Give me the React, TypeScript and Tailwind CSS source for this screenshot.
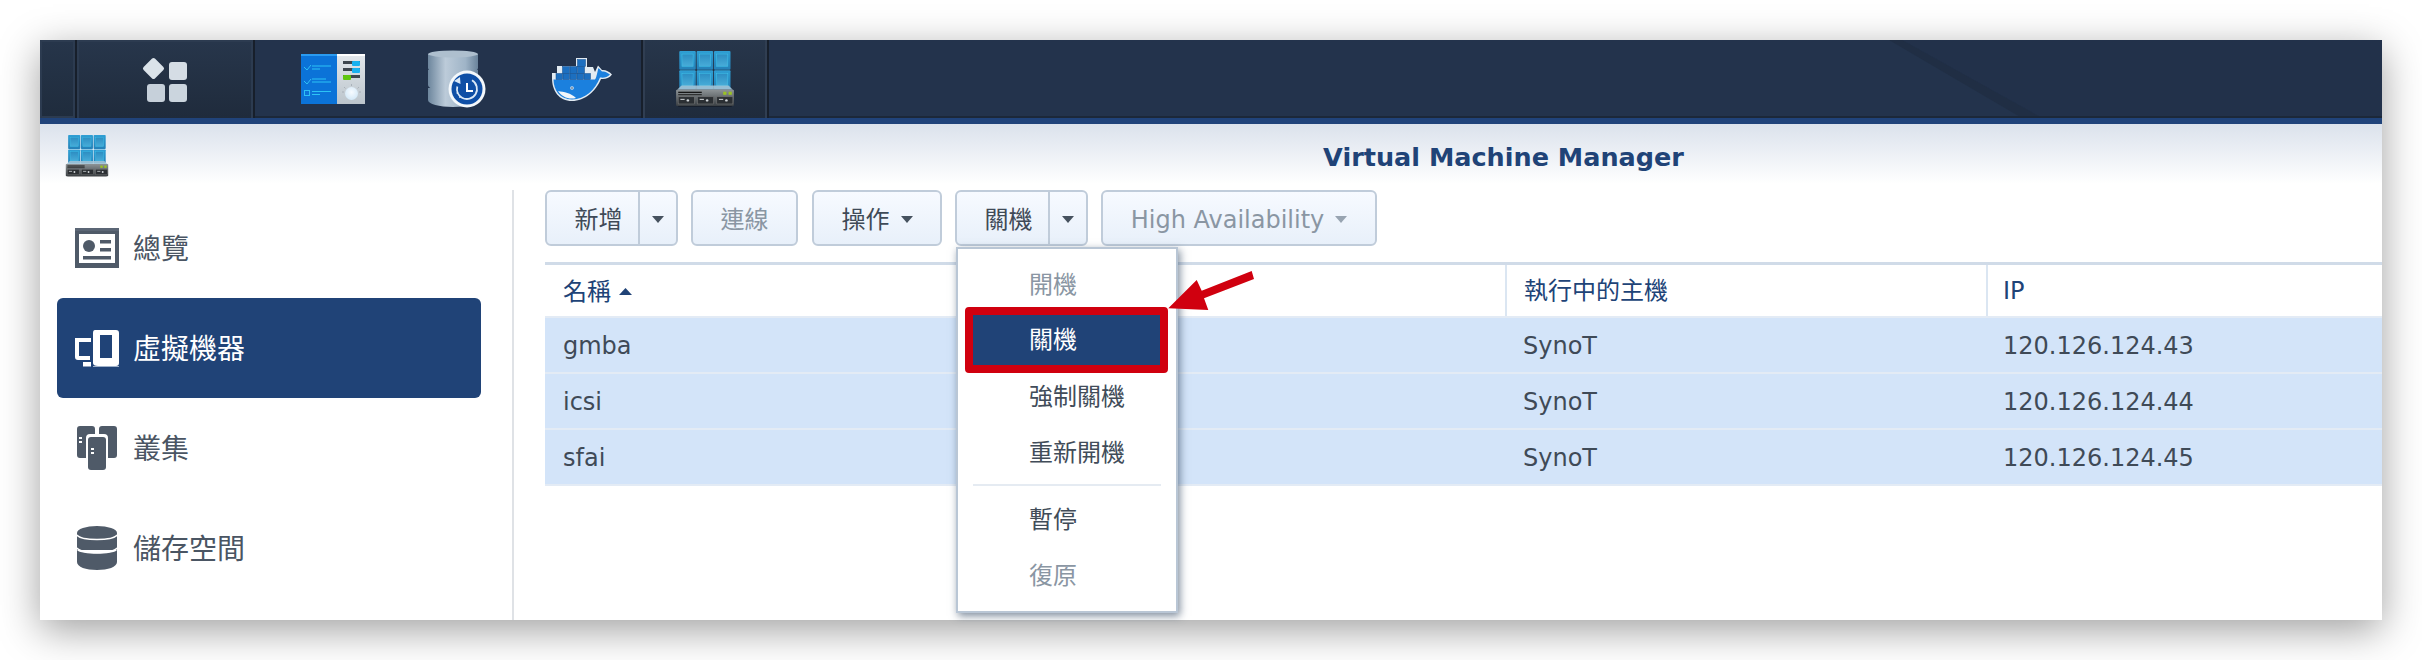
import React from "react";

function Caret({ muted = false, up = false }: { muted?: boolean; up?: boolean }) {
  return (
    <svg width={up ? 13 : 12} height="7" viewBox="0 0 12 7" preserveAspectRatio="none" className="shrink-0">
      <path d={up ? "M0 7L6 0L12 7Z" : "M0 0H12L6 7Z"} fill={up ? "#204377" : muted ? "#98a4b1" : "#46525f"} />
    </svg>
  );
}

function VmmIcon({ id, className }: { id: string; className: string }) {
  const cells = [0, 1, 2];
  return (
    <svg viewBox="0 0 56 55" preserveAspectRatio="none" className={className}>
      <defs>
        <linearGradient id={`${id}a`} x1="0" x2="0" y1="0" y2="1">
          <stop offset="0" stopColor="#2f9fd4" />
          <stop offset="1" stopColor="#2581b8" />
        </linearGradient>
        <linearGradient id={`${id}c`} x1="0" x2="0" y1="0" y2="1">
          <stop offset="0" stopColor="#2d8dc2" />
          <stop offset="1" stopColor="#47acd8" />
        </linearGradient>
        <linearGradient id={`${id}b`} x1="0" x2="0" y1="0" y2="1">
          <stop offset="0" stopColor="#8d9396" />
          <stop offset="1" stopColor="#3a3f43" />
        </linearGradient>
      </defs>
      {[0, 19].map((y) =>
        cells.map((c) => (
          <g key={`${y}-${c}`}>
            <rect x={4 + c * 16.2} y={y} width="15.4" height="18.4" rx="1" fill={`url(#${id}a)`} />
            <rect x={6.5 + c * 16.2} y={y + 3} width="10.4" height="12" fill={`url(#${id}c)`} stroke="#3fc3ea" strokeWidth="0.5" />
          </g>
        ))
      )}
      <path d="M6 34H50L54 38H2Z" fill="#a9c8d8" opacity="0.85" />
      <rect x="1" y="38" width="54" height="16" rx="1" fill={`url(#${id}b)`} />
      <rect x="3" y="40" width="22" height="1.2" fill="#111" />
      <rect x="3" y="42.4" width="22" height="1" fill="#222" />
      <rect x="45" y="40" width="3" height="3" fill="#9bc322" />
      <rect x="50" y="40" width="3" height="3" fill="#9bc322" />
      {[3, 21, 39].map((x) => (
        <g key={x}>
          <rect x={x} y="45" width="15" height="7" fill="#2b2f33" stroke="#777" strokeWidth="0.5" />
          <rect x={x + 2} y="47" width="4" height="1" fill="#cfd3d6" />
          <circle cx={x + 9} cy="48.5" r="1.2" fill="#cfd3d6" />
        </g>
      ))}
      <rect x="3" y="54" width="50" height="1" fill="#000" opacity="0.3" />
    </svg>
  );
}

function SettingsIcon() {
  return (
    <svg width="64" height="50" viewBox="0 0 64 50" className="shrink-0">
      <defs>
        <linearGradient id="setr" x1="0" x2="0" y1="0" y2="1">
          <stop offset="0" stopColor="#e3e8ec" />
          <stop offset="1" stopColor="#bcc5cc" />
        </linearGradient>
        <radialGradient id="setk" cx="0.5" cy="0.4" r="0.6">
          <stop offset="0" stopColor="#f7fbff" />
          <stop offset="1" stopColor="#d3e8f7" />
        </radialGradient>
      </defs>
      <rect x="0" y="0" width="36" height="50" fill="#0b73d8" />
      <rect x="0" y="0" width="36" height="2" fill="#2a9bf0" />
      <rect x="36" y="0" width="28" height="50" fill="url(#setr)" />
      <rect x="36" y="0" width="28" height="2" fill="#fff" />
      <g stroke="#2fc0f5" strokeWidth="1" fill="none">
        <path d="M3 13L6 16L10 11" />
        <path d="M3 27L6 30L10 25" />
        <rect x="3.5" y="36.5" width="5" height="5" />
      </g>
      <g fill="#2cc3f5">
        <rect x="11" y="11.500" width="19" height="1" />
        <rect x="11" y="14.500" width="8" height="1" />
        <rect x="11" y="24.500" width="14" height="1" />
        <rect x="11" y="27.500" width="19" height="1" />
        <rect x="11" y="37" width="19" height="1" />
        <rect x="11" y="40" width="8" height="1" />
      </g>
      <rect x="42" y="7" width="17" height="3" fill="#3e474f" />
      <rect x="51" y="7" width="8" height="5" rx="1" fill="#19b1ef" />
      <rect x="42" y="14" width="17" height="3" fill="#3e474f" />
      <rect x="51" y="14" width="8" height="5" rx="1" fill="#19b1ef" />
      <rect x="42" y="21" width="17" height="3" fill="#3e474f" />
      <rect x="42" y="21" width="8" height="5" rx="1" fill="#5fc60f" />
      <g stroke="#9ba5ad" strokeWidth="0.7">
        <path d="M50.500 30V32M43 33L44.500 34.500M58 33L56.500 34.500M41 38H43M58 38H60" />
      </g>
      <circle cx="50.500" cy="39.500" r="6.500" fill="url(#setk)" />
    </svg>
  );
}

function DbIcon() {
  return (
    <svg width="58" height="58" viewBox="0 0 58 58" className="shrink-0">
      <defs>
        <linearGradient id="dbg" x1="0" x2="1" y1="0" y2="0">
          <stop offset="0" stopColor="#6d869d" />
          <stop offset="0.35" stopColor="#bccbd9" />
          <stop offset="0.75" stopColor="#9fb4c7" />
          <stop offset="1" stopColor="#6a839b" />
        </linearGradient>
      </defs>
      <path d="M0 38V50C0 54 11 57 25 57S50 54 50 50V38Z" fill="url(#dbg)" />
      <path d="M0 20V35C0 39 11 42 25 42S50 39 50 35V20Z" fill="url(#dbg)" />
      <path d="M0 4V18C0 22 11 25 25 25S50 22 50 18V4Z" fill="url(#dbg)" />
      <ellipse cx="25" cy="4" rx="25" ry="3.500" fill="#aebfce" />
      <circle cx="39" cy="39" r="18.500" fill="#f4f8fb" />
      <circle cx="39" cy="39" r="15.500" fill="#0f4fa6" />
      <circle cx="39" cy="39" r="10" fill="none" stroke="#dbe9f7" strokeWidth="1.800" strokeDasharray="44 20" transform="rotate(-60 39 39)" />
      <path d="M26 31L32 27L32.500 34Z" fill="#dbe9f7" />
      <path d="M39 33V41H45" fill="none" stroke="#fff" strokeWidth="2" />
      <circle cx="29.500" cy="43" r="1" fill="#dbe9f7" />
      <circle cx="32" cy="47" r="1" fill="#dbe9f7" />
    </svg>
  );
}

function DockerIcon() {
  return (
    <svg width="60" height="43" viewBox="0 0 60 43" className="shrink-0">
      <path
        d="M24 0H35V9H41L43 14L46 7.500L50 12C53 11.500 57 13 60 16.500C57 20.500 53 21.500 49 21C44 33 33 43 20 43C7 43 0 33 0 20V15H5V8H24Z"
        fill="#e2ebf2"
      />
      <path
        d="M1.500 21.500H43C44.500 20 45 15 46.500 10L50 13.500C53 13 55.500 14.500 58 16.500C55 19.500 52 20 48 19.500C43 32 33 41.500 20 41.500C8 41.500 1.500 32 1.500 21.500Z"
        fill="#1b80de"
      />
      <path d="M6 33C12 34 19 35 24 40C17 42 10 39 6 33Z" fill="#f2f6fa" />
      <circle cx="20" cy="30" r="1.800" fill="#dbe6ef" />
      <circle cx="20" cy="30" r="0.800" fill="#284a6b" />
      <g fill="#1c6fc0" stroke="#0f4b8c" strokeWidth="0.5">
        {[4, 11, 18, 25, 32].map((x) => (
          <rect key={x} x={x} y="15.500" width="6.500" height="6" />
        ))}
        {[10.500, 18, 25.500].map((x) => (
          <rect key={x} x={x} y="8.500" width="7" height="7" />
        ))}
        <rect x="25.500" y="1.500" width="8" height="7" />
      </g>
    </svg>
  );
}

function OverviewIcon() {
  return (
    <svg width="44" height="40" viewBox="0 0 44 40">
      <path fillRule="evenodd" d="M0 0H44V40H0ZM4 6V35H40V6Z" fill="#4f5a68" />
      <rect x="0" y="0" width="44" height="3" fill="#5b6675" />
      <circle cx="14" cy="18" r="6" fill="#4f5a68" />
      <rect x="25" y="12" width="11" height="3.500" fill="#4f5a68" />
      <rect x="25" y="20" width="11" height="3.500" fill="#4f5a68" />
      <rect x="8" y="28" width="28" height="3.500" fill="#4f5a68" />
    </svg>
  );
}

function VmIcon() {
  return (
    <svg width="44" height="37" viewBox="0 0 44 37">
      <path fillRule="evenodd" d="M20 0H41Q44 0 44 3V33Q44 36 41 36H23Q18 36 18 33V3Q18 0 20 0ZM25 5V28H37V5Z" fill="#fff" />
      <path d="M28 5H37V28H33V9H28Z" fill="#204377" />
      <path d="M0 8H16V12H4V26H15V30H3Q0 30 0 27Z" fill="#fff" />
      <rect x="8" y="32" width="8" height="4.500" fill="#fff" />
      <path d="M18 36H44V37H18Z" fill="#9fb2cb" />
    </svg>
  );
}

function ClusterIcon() {
  return (
    <svg width="40" height="44" viewBox="0 0 40 44">
      <path d="M3 0H15Q18 0 18 3V8H13Q9 8 9 12V32H3Q0 32 0 29V3Q0 0 3 0Z" fill="#4f5a68" />
      <path d="M25 0H37Q40 0 40 3V29Q40 32 37 32H31V12Q31 8 27 8H22V3Q22 0 25 0Z" fill="#4f5a68" />
      <rect x="11" y="11" width="18" height="33" rx="3" fill="#4f5a68" />
      <g fill="#fff">
        <rect x="2" y="11" width="3" height="2" />
        <rect x="2" y="15" width="3" height="2" />
        <rect x="14" y="22" width="3" height="2" />
        <rect x="14" y="26" width="3" height="2" />
      </g>
    </svg>
  );
}

function StorageIcon() {
  return (
    <svg width="40" height="44" viewBox="0 0 40 44">
      <ellipse cx="20" cy="7" rx="20" ry="7" fill="#4f5a68" />
      <path d="M0 24V36C0 41 9 44 20 44S40 41 40 36V24C36 29 4 29 0 24Z" fill="#4f5a68" />
      <path d="M0 7V24H40V7Z" fill="#4f5a68" />
      <path d="M0 9C4 15 36 15 40 9" fill="none" stroke="#fff" strokeWidth="1.500" />
      <path d="M0 22C4 28 36 28 40 22" fill="none" stroke="#fff" strokeWidth="1.500" />
    </svg>
  );
}

function NavItem({ icon, label, active = false }: { icon: React.ReactNode; label: string; active?: boolean }) {
  return (
    <div
      className={
        "flex h-[100px] items-center rounded-[6px] pl-[18px] " +
        (active ? "bg-[#204377] text-white" : "text-[#4a5563]")
      }
    >
      <div className="flex w-[44px] justify-center">{icon}</div>
      <span className="ml-[14px] pt-[3px] text-[28px] leading-none">{label}</span>
    </div>
  );
}

function ToolButton({
  label,
  width,
  muted = false,
  caret = false,
  split = 0,
}: {
  label: string;
  width: string;
  muted?: boolean;
  caret?: boolean;
  split?: number;
}) {
  return (
    <div
      className={
        "flex h-[56px] items-center rounded-[6px] border-2 border-[#c0ccda] bg-gradient-to-b from-[#f7faff] to-[#e8f0fa] text-[24px] " +
        width +
        (muted ? " text-[#8a96a3]" : " text-[#3f4a57]")
      }
    >
      {split ? (
        <>
          <div className="flex h-full flex-1 items-center justify-center pl-[12px] pt-[3px]">{label}</div>
          <div className="flex h-full w-[38px] items-center justify-center border-l-2 border-[#c0ccda] pt-[2px]">
            <Caret />
          </div>
        </>
      ) : (
        <div className="flex w-full items-center justify-center gap-[11px] pt-[3px]">
          <span>{label}</span>
          {caret && <Caret muted={muted} />}
        </div>
      )}
    </div>
  );
}

function Row({ name, ip }: { name: string; ip: string }) {
  return (
    <div className="grid h-[56px] grid-cols-[960px_481px_1fr] items-center border-b-2 border-[#e3ebf5] bg-[#d3e4f9] pt-[1px] text-[24px] text-[#3f4a57]">
      <div className="pl-[18px]">{name}</div>
      <div className="pl-[18px]">SynoT</div>
      <div className="pl-[17px]">{ip}</div>
    </div>
  );
}

function MenuItem({ label, muted = false }: { label: string; muted?: boolean }) {
  return (
    <div className={"flex h-[56px] items-center pl-[71px] text-[24px] " + (muted ? "text-[#8a96a3]" : "text-[#414c59]")}>
      {label}
    </div>
  );
}

export default function App() {
  return (
    <div className="h-[660px] w-[2422px] overflow-hidden bg-white pl-[40px] pt-[40px] font-['DejaVu_Sans','Noto_Sans_CJK_TC',sans-serif]">
      <div className="relative flex h-[580px] w-[2342px] flex-col bg-white shadow-[0_10px_38px_rgba(0,0,0,0.38)]">
        {/* taskbar */}
        <div className="relative flex h-[78px] shrink-0 items-center overflow-hidden bg-[#23334c]">
          <svg className="absolute inset-0 h-full w-full" viewBox="0 0 2342 78" preserveAspectRatio="none">
            <path d="M1862 0H2342V78H2002Z" fill="#22314a" />
            <path d="M1849 0L1862 0L2002 78H1982Z" fill="#1f2d42" opacity="0.8" />
            <rect x="0" y="76" width="2342" height="2" fill="#1c2839" />
          </svg>
          <div className="relative h-full w-[35px] shrink-0 border-2 border-[#2c3b50] bg-gradient-to-b from-[#26354a] to-[#1f2c3d]" />
          <div className="relative ml-[2px] flex h-full w-[176px] shrink-0 items-center justify-center border-x-2 border-t-2 border-[#2c3b50] bg-gradient-to-b from-[#27364b] to-[#1f2b3c] shadow-[2px_0_0_#171f2b,-2px_0_0_#171f2b]">
            <svg width="46" height="46" viewBox="0 0 46 46">
              <rect x="3.500" y="3.500" width="16" height="16" rx="2" transform="rotate(45 11.500 11.500)" fill="#dbe3ea" />
              <rect x="27" y="5" width="18" height="18" rx="3" fill="#d5dde5" />
              <rect x="5" y="27" width="18" height="18" rx="3" fill="#c6d0da" />
              <rect x="27" y="27" width="18" height="18" rx="3" fill="#cbd5de" />
            </svg>
          </div>
          <div className="relative ml-[48px]">
            <SettingsIcon />
          </div>
          <div className="relative ml-[63px]">
            <DbIcon />
          </div>
          <div className="relative ml-[66px]">
            <DockerIcon />
          </div>
          <div className="relative ml-[31px] flex h-full w-[124px] shrink-0 items-center justify-center border-x-2 border-[#303e52] bg-gradient-to-b from-[#27364b] to-[#1f2b3c] shadow-[2px_0_0_#171f2b,-2px_0_0_#171f2b]">
            <VmmIcon id="big" className="h-[56px] w-[60px]" />
          </div>
        </div>
        <div className="h-[6px] shrink-0 bg-[#20437a]" />
        {/* window header */}
        <div className="flex h-[60px] shrink-0 items-start bg-gradient-to-b from-[#dbe2ec] to-white">
          <div className="ml-[25px] mt-[11px] w-[44px]">
            <VmmIcon id="small" className="h-[42px] w-[44px]" />
          </div>
          <div className="flex-1 pl-[516px] pt-[18px] text-center text-[25.5px] font-bold leading-[30px] text-[#204377]">
            Virtual Machine Manager
          </div>
        </div>
        {/* body */}
        <div className="relative flex min-h-0 flex-1">
          <div className="w-[472px] shrink-0 pl-[17px] pr-[31px] pt-[14px]">
            <NavItem icon={<OverviewIcon />} label="總覽" />
            <NavItem icon={<VmIcon />} label="虛擬機器" active />
            <NavItem icon={<ClusterIcon />} label="叢集" />
            <NavItem icon={<StorageIcon />} label="儲存空間" />
          </div>
          <div className="mt-[6px] w-[2px] shrink-0 bg-[#dfe2e6]" />
          <div className="min-w-0 flex-1 pl-[31px] pt-[6px]">
            <div className="flex">
              <ToolButton label="新增" width="w-[133px]" split={1} />
              <div className="ml-[13px]">
                <ToolButton label="連線" width="w-[107px]" muted />
              </div>
              <div className="ml-[14px]">
                <ToolButton label="操作" width="w-[130px]" caret />
              </div>
              <div className="ml-[13px]">
                <ToolButton label="關機" width="w-[133px]" split={1} />
              </div>
              <div className="ml-[13px]">
                <ToolButton label="High Availability" width="w-[276px]" muted caret />
              </div>
            </div>
            <div className="mt-[16px] border-t-[3px] border-[#d0dbe8]">
              <div className="grid h-[51px] grid-cols-[960px_481px_1fr] items-center text-[24px] text-[#204377]">
                <div className="flex items-center gap-[8px] pl-[18px] pt-[2px]">
                  <span>名稱</span>
                  <Caret up />
                </div>
                <div className="flex h-full items-center border-l-2 border-[#dbe6f2] pl-[17px] pt-[1px]">執行中的主機</div>
                <div className="flex h-full items-center border-l-2 border-[#dbe6f2] pl-[15px] pt-[1px]">IP</div>
              </div>
              <div className="border-t-2 border-[#e3ebf5]">
                <Row name="gmba" ip="120.126.124.43" />
                <Row name="icsi" ip="120.126.124.44" />
                <Row name="sfai" ip="120.126.124.45" />
              </div>
            </div>
          </div>
        </div>
        {/* dropdown */}
        <div className="absolute left-[916px] top-[207px] flex h-[366px] w-[222px] flex-col border-2 border-[#b9c6d5] bg-white pt-[8px] shadow-[2px_3px_8px_rgba(60,80,105,0.65)]">
          <MenuItem label="開機" muted />
          <div className="relative z-10 mb-[-4px] ml-[7px] mr-[8px] mt-[-6px] flex h-[66px] items-center rounded-[4px] border-[8px] border-[#d0000f] bg-[#204377] pl-[56px] text-[24px] text-white">
            關機
          </div>
          <MenuItem label="強制關機" />
          <MenuItem label="重新開機" />
          <div className="mx-[15px] mb-[6px] mt-[3px] h-[2px] bg-[#e5ebf2]" />
          <MenuItem label="暫停" />
          <MenuItem label="復原" muted />
        </div>
        {/* annotation arrow */}
        <svg className="absolute left-[1120px] top-[225px] h-[50px] w-[100px]" viewBox="0 0 100 50">
          <path d="M8.300 43.300L36.700 15L41.700 25.700L91.700 6L94 14L44 33.300L48.300 45Z" fill="#d0000f" />
        </svg>
      </div>
    </div>
  );
}
